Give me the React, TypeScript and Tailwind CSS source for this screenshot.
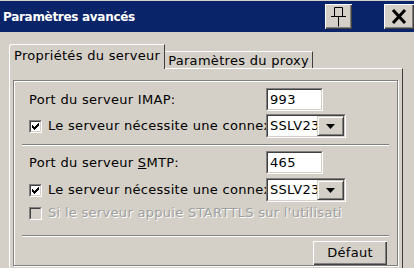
import React from "react";

const font = { fontFamily: '"DejaVu Sans", Tahoma, Verdana, sans-serif' };

function Check({ checked, disabled }: { checked?: boolean; disabled?: boolean }) {
  return (
    <span className="inline-flex h-[13px] w-[13px] shrink-0 border-t border-l border-t-[#808080] border-l-[#808080] border-b border-r border-b-white border-r-white">
      <span
        className={`flex h-full w-full items-center justify-center border-t border-l border-t-[#404040] border-l-[#404040] border-b border-r border-b-[#d4d0c8] border-r-[#d4d0c8] ${
          disabled ? "bg-[#d4d0c8]" : "bg-white"
        }`}
      >
        {checked && (
          <svg width="7" height="7" viewBox="0 0 7 7">
            <path d="M0 2h1v1h1v1h1V3h1V2h1V1h1V0h1v3h-1v1h-1v1h-1v1h-1v1h-1V6H1V5H0z" fill="#000" />
          </svg>
        )}
      </span>
    </span>
  );
}

function Edit({ value }: { value: string }) {
  return (
    <div className="h-[23px] w-[57px] border-t border-l border-t-[#808080] border-l-[#808080] border-b border-r border-b-white border-r-white">
      <div className="flex h-full items-center border-t border-l border-t-[#404040] border-l-[#404040] border-b border-r border-b-[#d4d0c8] border-r-[#d4d0c8] bg-white pl-[2px] text-black">
        {value}
      </div>
    </div>
  );
}

function Combo() {
  return (
    <div className="h-[24px] w-[80px] shrink-0 border-t border-l border-t-[#808080] border-l-[#808080] border-b border-r border-b-white border-r-white">
      <div className="flex h-full border-t border-l border-t-[#404040] border-l-[#404040] border-b border-r border-b-[#d4d0c8] border-r-[#d4d0c8] bg-white">
        <div className="flex-1 overflow-hidden whitespace-nowrap pl-[2px] leading-[20px] text-black">
          SSLV23
        </div>
        <div className="flex w-[27px] items-center justify-center border-t border-l border-t-[#d4d0c8] border-l-[#d4d0c8] border-b border-r border-b-[#404040] border-r-[#404040] bg-[#d4d0c8] shadow-[inset_1px_1px_0_#fff,inset_-1px_-1px_0_#808080]">
          <svg width="9" height="5" viewBox="0 0 9 5">
            <path d="M0 0h9L4.5 5z" fill="#000" />
          </svg>
        </div>
      </div>
    </div>
  );
}

function Separator() {
  return <div className="mx-[8px] h-[2px] border-t border-t-[#808080] border-b border-b-white" />;
}

export default function App() {
  return (
    <div
      className="h-[268px] w-[414px] overflow-hidden bg-[#d4d0c8] pt-[1px] text-[13px] tracking-[0.3px] text-black"
      style={font}
    >
      <div className="flex h-[31px] items-center bg-[#0a246a] pl-[3px] pr-0">
        <span className="flex-1 text-[12px] font-bold tracking-[-0.3px] text-white">Paramètres avancés</span>
        <div className="flex h-[25px] w-[27px] items-center justify-center bg-[#d4d0c8] shadow-[inset_1px_1px_0_#fff,inset_-1px_-1px_0_#404040,inset_-2px_-2px_0_#808080]">
          <svg width="17" height="21" viewBox="0 0 17 21">
            <path d="M4.5 1.5h8v9h-8z M1 10.5h15 M8.5 10.5v10" stroke="#000" strokeWidth="1" fill="none" />
          </svg>
        </div>
        <div className="ml-[32px] flex h-[25px] w-[30px] items-center justify-center bg-[#d4d0c8] shadow-[inset_1px_1px_0_#fff,inset_-1px_-1px_0_#404040,inset_-2px_-2px_0_#808080]">
          <svg width="16" height="15" viewBox="0 0 16 15">
            <path d="M2 1l12 13M14 1L2 14" stroke="#000" strokeWidth="3" />
          </svg>
        </div>
      </div>

      <div className="pl-[9px] pr-[11px] pt-[12px]">
        <div className="flex items-end">
          <div className="relative z-10 -mb-[1px] flex h-[25px] items-center rounded-tl-[3px] border-t border-l border-t-white border-l-white border-r border-r-[#404040] bg-[#d4d0c8] px-[4px] pb-[2px]">
            Propriétés du serveur
          </div>
          <div className="flex h-[17px] items-center border-t border-t-white border-r border-r-[#404040] px-[3px] pt-[1px]">
            Paramètres du proxy
          </div>
        </div>
        <div className="h-[201px] border-t border-l border-t-white border-l-white border-r border-b border-r-[#404040] border-b-[#404040] pl-[3px] pr-[4px] pt-[11px]">
          <div className="flex h-[186px] flex-col border border-[#808080] shadow-[inset_1px_1px_0_#fff,1px_1px_0_#fff] pt-[7px]">
            <div className="flex h-[23px] items-center pl-[15px]">
              <span className="w-[237px] whitespace-nowrap">Port du serveur IMAP:</span>
              <Edit value="993" />
            </div>
            <div className="mt-[3px] flex h-[24px] items-center pl-[15px]">
              <Check checked />
              <span className="ml-[6px] w-[218px] overflow-hidden whitespace-nowrap">
                Le serveur nécessite une connexion sécurisée
              </span>
              <Combo />
            </div>
            <div className="mt-[6px]">
              <Separator />
            </div>
            <div className="mt-[5px] flex h-[23px] items-center pl-[15px]">
              <span className="w-[237px] whitespace-nowrap">
                Port du serveur <span className="underline">S</span>MTP:
              </span>
              <Edit value="465" />
            </div>
            <div className="mt-[4px] flex h-[24px] items-center pl-[15px]">
              <Check checked />
              <span className="ml-[6px] w-[218px] overflow-hidden whitespace-nowrap">
                Le serveur nécessite une connexion sécurisée
              </span>
              <Combo />
            </div>
            <div className="mt-[4px] flex h-[14px] items-center pl-[15px]">
              <Check disabled />
              <span className="ml-[6px] w-[294px] overflow-hidden whitespace-nowrap text-[#a0a0a0] [text-shadow:1px_1px_0_#fff]">
                Si le serveur appuie STARTTLS sur l'utilisation
              </span>
            </div>
            <div className="mt-[15px]">
              <Separator />
            </div>
            <div className="mt-[4px] flex justify-end pr-[10px]">
              <button className="h-[24px] w-[74px] bg-[#d4d0c8] text-black shadow-[inset_1px_1px_0_#fff,inset_-1px_-1px_0_#404040,inset_-2px_-2px_0_#808080]">
                Défaut
              </button>
            </div>
          </div>
        </div>
      </div>
    </div>
  );
}
